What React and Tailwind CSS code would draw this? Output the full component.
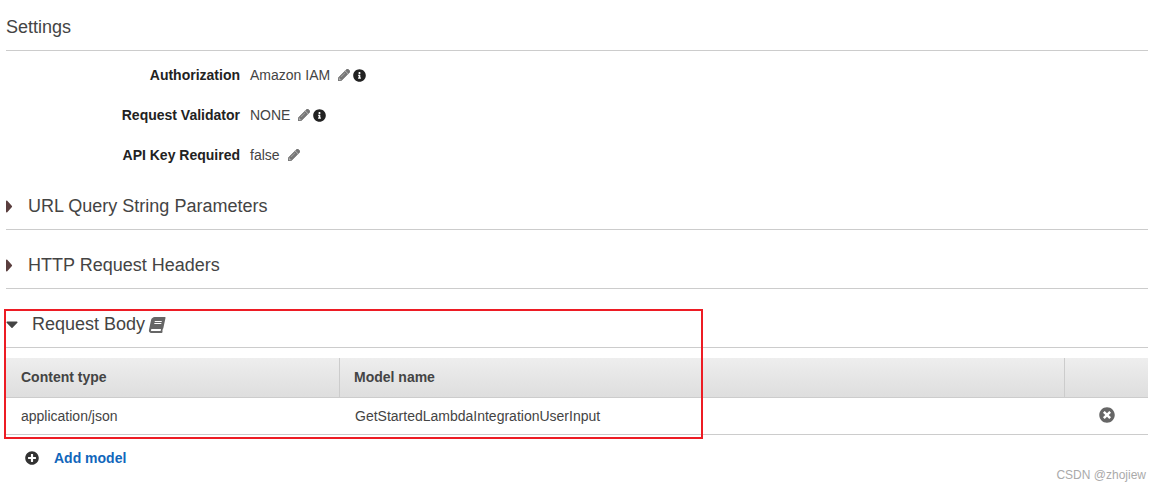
import React from "react";
import { FaPencilAlt, FaInfoCircle, FaBook, FaPlusCircle, FaTimesCircle, FaCaretRight, FaCaretDown } from "react-icons/fa";

function SettingRow({ label, value, info }) {
  return (
    <div className="flex h-10 items-center">
      <div className="w-[234px] text-right text-[14px] font-bold text-[#222]">{label}</div>
      <div className="ml-[10px] text-[14px] text-[#444]">{value}</div>
      <FaPencilAlt className="ml-2 text-[12px] text-[#777]" stroke="currentColor" strokeWidth="30" />
      {info && <FaInfoCircle className="ml-[4px] -translate-x-px text-[13px] text-[#222]" />}
    </div>
  );
}

function Section({ title }) {
  return (
    <div className="flex h-[59px] items-center border-b border-[#ccc] pt-[13px]">
      <FaCaretRight className="h-[21px] w-[7px] shrink-0 text-[#5a3e3e]" preserveAspectRatio="none" />
      <span className="ml-[15px] text-[18px] text-[#444]">{title}</span>
    </div>
  );
}

export default function App() {
  return (
    <div className="relative h-[491px] w-[1162px] overflow-hidden bg-white pl-[6px] font-['Liberation_Sans',Arial,sans-serif]">
      <div className="w-[1142px]">
        <div className="flex h-[51px] items-center border-b border-[#ccc] pt-[5px] text-[18px] text-[#444]">Settings</div>
        <div className="pt-1">
          <SettingRow label="Authorization" value="Amazon IAM" info />
          <SettingRow label="Request Validator" value="NONE" info />
          <SettingRow label="API Key Required" value="false" />
        </div>
        <div className="-mt-[4px]">
          <Section title="URL Query String Parameters" />
          <Section title="HTTP Request Headers" />
        </div>
        <div className="flex h-[59px] items-center border-b border-[#ccc] pt-[13px]">
          <FaCaretDown className="h-[20px] w-[12px] shrink-0 -translate-y-[1px] text-[#444]" preserveAspectRatio="none" />
          <span className="ml-[14px] text-[18px] text-[#444]">Request Body</span>
          <FaBook className="ml-[4px] text-[16px] text-[#666] -skew-x-12" />
        </div>
        <div className="mt-[10px]">
          <div className="flex h-10 border-b border-[#ccc] bg-gradient-to-b from-[#eeeeee] to-[#dedede] text-[14px] font-bold text-[#444]">
            <div className="flex w-[334px] items-center border-r border-[#ccc] pl-[15px]">Content type</div>
            <div className="flex w-[725px] items-center border-r border-[#ccc] pl-[14px]">Model name</div>
            <div className="flex-1" />
          </div>
          <div className="flex h-[37px] items-center border-b border-[#ccc] text-[14px] text-[#444]">
            <div className="w-[334px] pl-[15px]">application/json</div>
            <div className="flex-1 pl-[15px]">GetStartedLambdaIntegrationUserInput</div>
            <FaTimesCircle className="mr-[33px] -translate-y-px text-[16px] text-[#666]" />
          </div>
        </div>
        <div className="flex h-[46px] items-center pl-[19px]">
          <FaPlusCircle className="text-[14px] text-[#333]" />
          <span className="ml-[15px] text-[14px] font-bold text-[#1166bb]">Add model</span>
        </div>
      </div>
      <div className="absolute left-[4px] top-[309px] h-[130px] w-[699px] border-2 border-[#ed1c24]" />
      <div className="absolute right-[16px] top-[466px] text-[12px] text-[#aaa]">CSDN @zhojiew</div>
    </div>
  );
}
